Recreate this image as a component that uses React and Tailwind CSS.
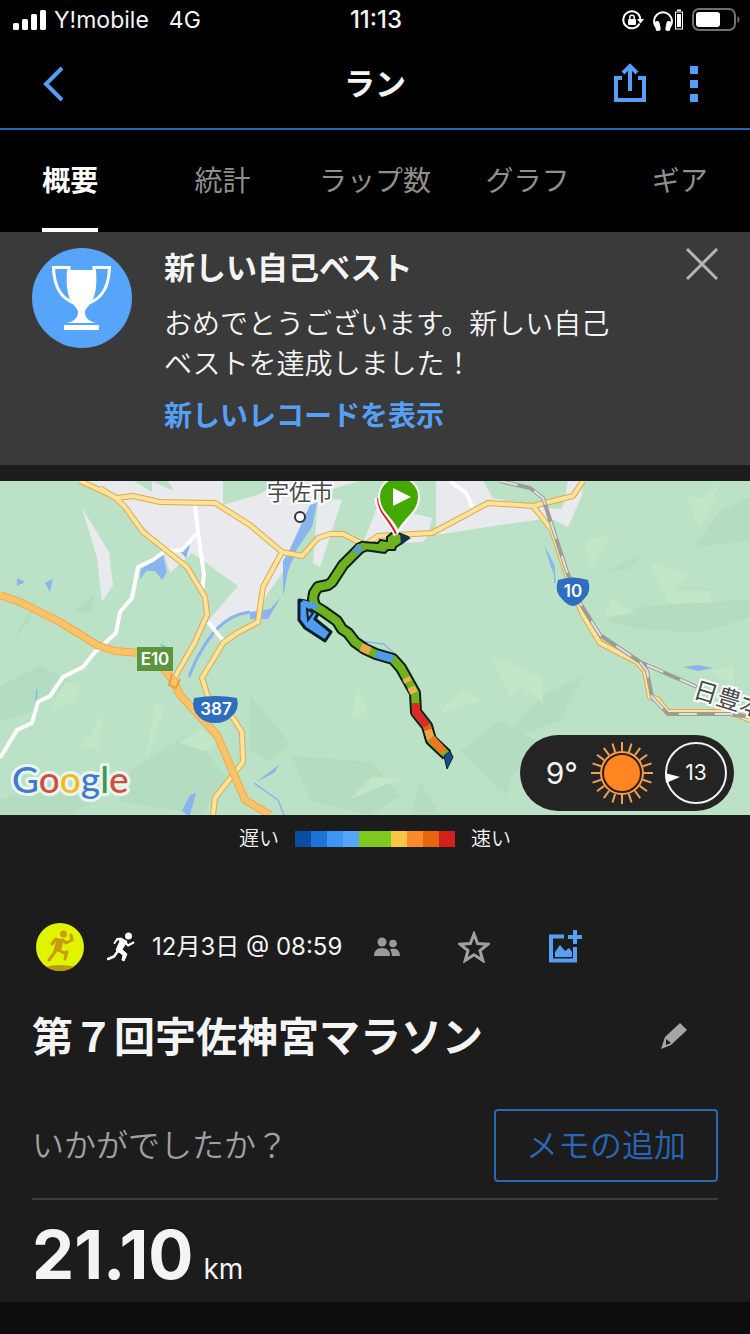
const tabs = ["概要", "統計", "ラップ数", "グラフ", "ギア"];

const paceColors = [
  "bg-[#0a4ea2]",
  "bg-[#1b74d8]",
  "bg-[#3d95f5]",
  "bg-[#55a5fb]",
  "bg-[#7fc81e]",
  "bg-[#7fc81e]",
  "bg-[#fbc548]",
  "bg-[#fb8a28]",
  "bg-[#e8650f]",
  "bg-[#d3201f]",
];

function StatusBar() {
  return (
    <div className="grid h-10 grid-cols-3 items-center pl-3 pr-2.5 text-[23px]">
      <div className="flex items-center whitespace-nowrap">
        <svg className="mr-1.5 h-6 w-9" viewBox="0 0 36 24" fill="#fff">
          <rect x="1" y="15" width="6" height="7" rx="1.5" />
          <rect x="10" y="11" width="6" height="11" rx="1.5" />
          <rect x="19" y="6" width="6" height="16" rx="1.5" />
          <rect x="28" y="2" width="6" height="20" rx="1.5" />
        </svg>
        <span>Y!mobile</span>
        <span className="ml-5">4G</span>
      </div>
      <time className="text-center text-2xl font-medium">11:13</time>
      <div className="flex items-center justify-end">
        <svg className="mr-2 h-6 w-6" viewBox="0 0 24 24" fill="none" stroke="#fff" strokeWidth="2">
          <path d="M19.5 15.5A8.5 8.5 0 1 1 20.3 11" />
          <path d="M17 11h7l-3.5 4.5z" fill="#fff" stroke="none" />
          <rect x="8" y="11" width="8" height="6" rx="1" fill="#fff" stroke="none" />
          <path d="M9.8 11.500V9.500a2.200 2.200 0 0 1 4.400 0v2" strokeWidth="1.500" />
        </svg>
        <svg className="mr-2 h-6 w-8" viewBox="0 0 32 24">
          <path d="M4 19A9 9 0 1 1 18 19" fill="none" stroke="#fff" strokeWidth="2" />
          <rect x="3" y="13" width="5" height="10" rx="2" fill="#fff" transform="rotate(-12 5.500 17.500)" />
          <rect x="14" y="13" width="5" height="10" rx="2" fill="#fff" transform="rotate(12 16.500 17.500)" />
          <rect x="23.500" y="4" width="7" height="17" fill="none" stroke="#fff" />
          <path d="M25 6h4v13h-4zM25 1.500h4v1.500h-4z" fill="#fff" />
        </svg>
        <svg className="h-6 w-12" viewBox="0 0 48 24">
          <rect x="1" y="1" width="42" height="21" rx="6" fill="none" stroke="#707070" strokeWidth="2" />
          <rect x="4" y="4" width="24" height="15" rx="3" fill="#fff" />
          <path d="M45.500 8q2 1 2 3.500t-2 3.500z" fill="#707070" />
        </svg>
      </div>
    </div>
  );
}

function NavBar() {
  return (
    <header className="grid h-[90px] grid-cols-3 items-center border-b-2 border-[#2463b0] px-8">
      <button aria-label="戻る" className="flex h-10 w-11 items-center justify-center">
        <svg className="h-9 w-6" viewBox="0 0 24 36" fill="none" stroke="#569ff7" strokeWidth="4">
          <path d="M20 2 4 18l16 16" />
        </svg>
      </button>
      <h1 className="text-center text-[31px] font-bold leading-10">ラン</h1>
      <div className="flex items-center justify-end gap-[42px] pr-5">
        <button aria-label="共有" className="pb-1">
          <svg className="h-10 w-9" viewBox="0 0 36 40" fill="none" stroke="#569ff7" strokeWidth="4">
            <path d="M10 16H4v22h28V16h-6" />
            <path d="M18 29V4M11 11l7-7 7 7" />
          </svg>
        </button>
        <button aria-label="メニュー" className="flex flex-col gap-1.5">
          <span className="size-2 bg-[#569ff7]" />
          <span className="size-2 bg-[#569ff7]" />
          <span className="size-2 bg-[#569ff7]" />
        </button>
      </div>
    </header>
  );
}

function Tabs() {
  return (
    <nav className="overflow-hidden">
      <div className="-mx-1.5 grid h-[102px] grid-cols-5 justify-items-center">
        {tabs.map((tab, i) => (
          <button
            key={tab}
            className={
              i === 0
                ? "border-b-4 border-white pt-1 font-bold text-white text-[28px]"
                : "border-b-4 border-transparent pt-1 text-[28px] text-[#8f8f8f]"
            }
          >
            {tab}
          </button>
        ))}
      </div>
    </nav>
  );
}

function RecordBanner() {
  return (
    <section className="flex items-start gap-8 bg-[#3a3a3a] px-8 pb-[29px] pt-4">
      <svg className="size-[100px] shrink-0" viewBox="0 0 100 100">
        <circle cx="50" cy="50" r="50" fill="#56a5fb" />
        <path d="M35 22h29c1 14 0 24-4 31-3 5-7 8-7 11 0 5 3 9 11 11H35c8-2 11-6 11-11 0-3-4-6-7-11-4-7-5-17-4-31z" fill="#fff" />
        <path
          d="M37 24V19.500H21.500C22 36 28 50 42 55M62 24V19.500H77.500C77 36 71 50 57 55"
          fill="none"
          stroke="#fff"
          strokeWidth="3"
        />
        <path d="M32 77h35v5H32z" fill="#fff" />
      </svg>
      <div className="flex-1 text-[28px] leading-10">
        <h2 className="text-[31px] font-bold">新しい自己ベスト</h2>
        <p className="mt-4 max-w-[460px] font-[350]">おめでとうございます。新しい自己ベストを達成しました！</p>
        <a href="#records" className="mt-3 block font-bold text-[#569ff7]">
          新しいレコードを表示
        </a>
      </div>
      <button aria-label="閉じる">
        <svg className="size-8" viewBox="0 0 32 32" stroke="#b4b4b4" strokeWidth="3">
          <path d="M1 1l30 30M31 1 1 31" />
        </svg>
      </button>
    </section>
  );
}

const yellowRoads = [
  "M80 0 100 9 117 17 133 15 160 21 215 22 250 44 282 71 302 75 318 57 330 53 343 53 365 64 378 55 432 52 488 22 533 25 573 15 583 0",
  "M100 7 117 18 125 26 143 51 162 66 187 86 205 116 207 134 195 161 175 196",
  "M282 71 263 106 258 141 237 152 223 162 202 197 208 216 233 237 242 251 243 281 215 317 213 334",
  "M533 25 552 49 567 94 583 134 600 162 637 181 645 190 650 216 657 218 668 231 730 231 750 239",
];

const expressway =
  "M0 114 20 121 60 141 97 164 115 170 140 172 160 184 173 199 180 214 217 254 230 284 245 319 270 334";

const whiteRoads =
  "M0 277 17 249 32 242 38 221 50 215 63 196 83 186 95 171 116 152 120 131 132 117 138 86 153 79 165 70 182 69 198 51 195 24M198 51 204 94 202 110M208 141 225 162M450 0 466 12 474 29";

const railways =
  "M500 0 530 7 543 17 567 91 580 122 600 154 640 181 697 206M640 181 647 190 652 216 668 233 730 233 750 236";

const routeLine =
  "M365 65 360 67 343 84 332 101 328 104 318 106 314 112 313 118 315 125 323 130 337 140 342 148 348 152 355 161 365 168 376 173 393 178 401 187 415 212 416 231 427 245 431 259 447 274";

const routeParts = [
  ["M361 65 355 72", "#5c9fb8"],
  ["M361 166 370 170", "#f0a44c"],
  ["M376 173 393 178", "#4d99ea"],
  ["M406 197 408 201M411 206 414 212", "#f0b04c"],
  ["M416 222 416 231 427 245", "#d92a25"],
  ["M427 245 428 249", "#ea5a20"],
  ["M428 249 431 258", "#f0a43c"],
  ["M431 257 444 271", "#ef7623"],
];

function RouteMap() {
  return (
    <svg
      className="block h-[334px] w-full"
      viewBox="0 0 750 334"
      preserveAspectRatio="xMidYMid slice"
      role="img"
      aria-label="コースマップ"
    >
      <rect width="750" height="334" fill="#bbe2c6" />

      {/* terrain shading */}
      <g fill="#b3dcc0">
        <path d="M0 205 40 184 70 200 30 232 0 240zM0 318 60 300 90 322 70 334 0 334zM130 290 190 252 230 300 200 334 120 320zM75 130 95 113 90 132z" />
        <path d="M250 214 290 262 270 280 250 268zM292 275 372 281 400 315 370 334 310 320zM460 270 500 240 540 262 500 310z" />
        <path d="M502 260 540 216 584 194 560 240 510 258zM604 140 640 126 750 118 750 136 700 152 640 148zM694 66 720 30 750 16 750 60zM605 90 640 74 630 88zM420 300 440 334 412 334z" />
        <path d="M12 160 36 118 30 140zM500 300 514 284 506 318z" />
      </g>
      <g fill="#c4e6c8">
        <path d="M50 230 66 200 80 207 72 222zM83 265 103 232 98 268zM146 280 155 222 164 228zM178 262 200 248 220 262 205 270z" />
        <path d="M352 238 357 204 368 230zM440 234 443 226 463 210 483 220 450 228zM350 318 372 296 400 298zM492 178 512 190 512 220z" />
        <path d="M500 178 543 198 543 222 520 205 512 215 500 195zM585 60 612 53 590 88zM650 82 687 94 672 110 665 110zM665 110 711 110 711 122 668 122zM604 136 612 118 636 132zM687 14 703 17 720 4 699 48zM710 190 734 185 733 204z" />
      </g>

      {/* built-up areas */}
      <g fill="#e8eaed">
        <path d="M84 0H134L152 11V0H223V24L260 13 282 0H360L318 12 305 50 292 78 268 112 258 130 236 134 215 148 208 140 238 105 192 72 170 92 162 66 126 27 100 9z" />
        <path d="M82 27 109 71 113 104 102 121 97 77zM318 17 342 19 320 86 313 82zM378 24 432 37 428 55 423 61 365 64 365 57zM436 0H483L493 17 533 25 563 25 568 0H583L582 14 568 46 550 37 500 44 436 54z" />
      </g>
      <path d="M152 0H168L174 10zM540 14 562 8 562 28 545 27z" fill="#bbe2c6" />

      {/* water */}
      <g fill="#8ab4f0">
        <path d="M140 99 141 88 163 74 167 91 162 99 155 90 146 90zM178 68 190 64 186 77zM17 97 25 101 17 105zM45 102 53 98 50 111z" />
        <path d="M310 24 317 22 312 46 297 68 288 90 283 116 283 80 290 68zM250 131 270 128 281 116 268 138 250 138zM160 163 166 165 163 168z" />
        <path d="M187 334 182 330 190 314 196 312 190 334zM256 301 280 283 274 292zM683 186 698 184 713 187 698 190zM544 64 554 83 553 92z" />
      </g>
      <g fill="none" stroke="#8ab4f0">
        <path d="M250 131C222 134 208 158 200 172 193 184 192 188 189 196" strokeWidth="3" />
        <path d="M254 302 278 319 284 334M358 160 384 163 396 174M554 84 555 102M37 208 36 220" strokeWidth="1.5" />
      </g>

      {/* roads and rail */}
      <g fill="none" strokeLinejoin="round">
        <path d={whiteRoads} stroke="#fff" strokeWidth="4" />
        {yellowRoads.map((d) => (
          <path key={d} d={d} stroke="#dfa850" strokeWidth="6" />
        ))}
        {yellowRoads.map((d) => (
          <path key={d} d={d} stroke="#fde49a" strokeWidth="4" />
        ))}
        <path d={expressway} stroke="#f0a84c" strokeWidth="8" />
        <path d={expressway} stroke="#fbc368" strokeWidth="6" />
        <path d="M172 193 169 204 176 207 180 198" stroke="#ee9d3c" strokeWidth="2" />
        <path d={railways} stroke="#9b9b97" strokeWidth="4" />
        <path d={railways} stroke="#dfe3de" strokeWidth="2" strokeDasharray="18 18" />
      </g>

      {/* place names and road shields */}
      <g fontFamily="Inter, 'Noto Sans CJK JP', sans-serif">
        <g fill="#4a4a4a" stroke="#fff" strokeWidth="4" paintOrder="stroke" fontSize="22">
          <text x="267" y="19">宇佐市</text>
          <text fontSize="24" transform="translate(692 216) rotate(17)">日豊本線</text>
        </g>
        <circle cx="300" cy="36" r="5" fill="#fff" stroke="#333" strokeWidth="2" />
        <rect x="137" y="166" width="36" height="24" fill="#5c9440" />
        <path d="M194 217q22-4 43 0 3 12-6 19-6 6-16 6t-16-6q-8-7-5-19z" fill="#2f6dc0" />
        <path d="M558 99q15-5 30 0 4 12-4 19-6 7-11 7t-11-7q-8-7-4-19z" fill="#2f6dc0" />
        <g fill="#fff" fontSize="17" fontWeight="600" textAnchor="middle">
          <text x="155" y="184">E10</text>
          <text x="216" y="234">387</text>
          <text x="573" y="116">10</text>
        </g>
      </g>

      {/* recorded route */}
      <g fill="none" strokeLinejoin="round">
        <path d="M299 119 317 122 321 128 315 138 331 151 325 160 305 147 299 139z" fill="#4f9cf0" stroke="#0b1f2c" strokeWidth="3" />
        <path d={routeLine} stroke="#0b1f14" strokeWidth="12" />
        <path d="M362 61 378 62 380 59 387 60 387 56 392 52 398 52 408 56 402 62 396 66 395 69 388 69 385 72 364 69z" fill="#6eb31f" stroke="#0b1f14" strokeWidth="2" />
        <path d={routeLine} stroke="#6eb31f" strokeWidth="8" />
        {routeParts.map(([d, color]) => (
          <path key={d} d={d} stroke={color} strokeWidth="8" />
        ))}
        <path d="M302 122 317 126" stroke="#4f9cf0" strokeWidth="6" />
      </g>
      <path d="M307 128 313 132 308 139z" fill="#7a9fc0" stroke="#0b1f2c" strokeWidth="2" />
      <path d="M400 52 411 57 401 64z" fill="#16324a" />
      <path d="M444 275 450 270 453 276 447 288z" fill="#164c8a" stroke="#0b1f2c" />

      {/* start marker */}
      <path d="M396 54C390 38 377 32 377 17" fill="none" stroke="#fff" strokeWidth="5" />
      <path d="M396 53C390 38 378 32 378 17" fill="none" stroke="#d0202c" strokeWidth="2" />
      <path d="M398 51C393 37 379 32 379 16a20 20 0 0 1 40 0C419 32 404 37 398 51z" fill="#43a800" stroke="#fff" strokeWidth="2" />
      <path d="M393 7 411 16 393 25z" fill="#fff" />

      <g
        transform="translate(12 312)"
        fontFamily="Lato, sans-serif"
        fontSize="37"
        fontWeight="500"
        stroke="#e9f6ee"
        strokeWidth="6"
        strokeLinejoin="round"
        paintOrder="stroke"
      >
        <text>
          <tspan fill="#4379d0">G</tspan>
          <tspan fill="#d64b3c">o</tspan>
          <tspan fill="#f0bb1c">o</tspan>
          <tspan fill="#4379d0">g</tspan>
          <tspan fill="#3b9a57">l</tspan>
          <tspan fill="#d64b3c">e</tspan>
        </text>
      </g>
    </svg>
  );
}

function Weather() {
  const rays = Array.from({ length: 20 }, (_, i) => i * 18);

  return (
    <div className="absolute bottom-1 right-4 flex h-[76px] items-center rounded-full bg-[#242424] pl-[26px] pr-1.5">
      <span className="text-[30px]">9°</span>
      <svg className="ml-3 size-16" viewBox="-32 -32 64 64" stroke="#f0a050" strokeWidth="2">
        {rays.map((angle) => (
          <path key={angle} d="M0-22V-31" transform={`rotate(${angle})`} />
        ))}
        <circle r="21" fill="#3a1a06" />
        <circle r="18" fill="#ff8620" stroke="none" />
      </svg>
      <div className="relative ml-2.5 flex size-16 items-center justify-center">
        <svg className="absolute inset-0" viewBox="-32 -32 64 64">
          <circle r="30" fill="none" stroke="#f2f2f2" strokeWidth="2" />
          <path d="M-31 0-16 4-30 10z" fill="#fff" />
        </svg>
        <span className="text-[21px]">13</span>
      </div>
    </div>
  );
}

function PaceLegend() {
  return (
    <div className="flex h-12 items-center justify-center gap-4 text-xl font-[350]">
      <span>遅い</span>
      <div className="flex">
        {paceColors.map((color, i) => (
          <span key={i} className={`size-4 ${color}`} />
        ))}
      </div>
      <span>速い</span>
    </div>
  );
}

function Runner({ className, color }) {
  return (
    <svg className={className} viewBox="0 0 28 30" fill="none" stroke={color} strokeLinecap="round" strokeLinejoin="round">
      <circle cx="21.500" cy="4" r="3.500" fill={color} stroke="none" />
      <path d="M10 6.500 14 6 20 9.500 15 17.500 20 22 17 29 15 28 16 23 9 18 13 9z" fill={color} strokeWidth="1" />
      <path d="M13 7 10 7.500 7.500 11M18 10l3 3.500 5.500-3" strokeWidth="2" />
      <path d="M11 19l-4 5.500-6 2.500" strokeWidth="2.500" />
    </svg>
  );
}

function ActivityMeta() {
  return (
    <div className="mt-[60px] flex h-12 items-center pl-1">
      <svg className="size-12" viewBox="0 0 48 48">
        <circle cx="24" cy="24" r="24" fill="#e0f400" />
        <path d="M10 43.500q14-3 28 0-14 9-28 0z" fill="#b39a10" />
        <g fill="none" stroke="#c79c10" strokeLinecap="round" strokeLinejoin="round">
          <circle cx="27.500" cy="11" r="3.500" fill="#c79c10" stroke="none" />
          <path d="M20 16 27 17 24 27 18 29 21 19z" fill="#c79c10" strokeWidth="2" />
          <path d="M20 16 16 21M27 17l3 3 6-3-1-5M19 29l-6 8" strokeWidth="3" />
          <path d="M23 27l5 3 3-1-2 7" strokeWidth="3" />
        </g>
      </svg>
      <Runner className="ml-[23px] h-[30px] w-7" color="#fff" />
      <time className="ml-[17px] whitespace-nowrap text-2xl">12月3日 @ 08:59</time>
      <button aria-label="公開範囲" className="ml-8">
        <svg className="h-5 w-[26px]" viewBox="0 0 26 20" fill="#9a9a9a">
          <circle cx="8" cy="5" r="4.500" />
          <circle cx="19" cy="6.500" r="3.800" />
          <path d="M0 19q0-8 8-8t8 8zM18 19q0-4-2-6.500 1.500-1 3.500-1 6 0 6.500 7.500z" />
        </svg>
      </button>
      <button aria-label="お気に入り" className="ml-[58px]">
        <svg className="size-8" viewBox="0 0 32 32" fill="none" stroke="#a0a0a0" strokeWidth="3">
          <path d="M16 3 19.600 12.500 30 13.200 22 19.500 24.800 29.500 16 23.800 7.200 29.500 10 19.500 2 13.200 12.400 12.500z" />
        </svg>
      </button>
      <button aria-label="写真を追加" className="ml-[57px]">
        <svg className="size-9" viewBox="0 0 36 36">
          <path d="M17 7.500H4v24h24V18" fill="none" stroke="#569ff7" strokeWidth="4" />
          <path d="M28 1v14M21 8h14" stroke="#569ff7" strokeWidth="4" />
          <path d="M8 28v-5l5-7 5 6 4-3 3 4v5z" fill="#569ff7" />
        </svg>
      </button>
    </div>
  );
}

export default function App() {
  return (
    <div className="flex h-screen flex-col bg-[#1c1c1c] font-['Inter','Noto_Sans_CJK_JP',sans-serif] text-[#f4f4f4]">
      <div className="bg-black">
        <StatusBar />
        <NavBar />
        <Tabs />
      </div>
      <main className="min-h-0 flex-1 overflow-hidden">
        <RecordBanner />
        <div className="relative mt-4">
          <RouteMap />
          <Weather />
        </div>
        <PaceLegend />
        <div className="px-8">
          <ActivityMeta />
          <div className="mt-[34px] flex items-center justify-between pr-7">
            <h2 className="text-[41px] font-bold leading-[64px]">第７回宇佐神宮マラソン</h2>
            <button aria-label="タイトルを編集">
              <svg className="size-8" viewBox="0 0 32 32" fill="#a6a6a6">
                <path d="M22 2 29 9 13 24 3 28 7 16z" />
                <path d="M8 18l5 4-5 2z" fill="#1c1c1c" />
              </svg>
            </button>
          </div>
          <div className="mt-10 flex items-center justify-between text-[32px]">
            <p className="font-[350] text-[#a0a0a0]">いかがでしたか？</p>
            <button className="h-[73px] rounded-sm border-2 border-[#2968b8] px-[30px] font-[350] text-[#2968b8]">
              メモの追加
            </button>
          </div>
          <hr className="mt-4 border-t-2 border-[#3c3c3c]" />
          <div className="mt-[22px] flex items-baseline gap-2.5 leading-[66px]">
            <strong className="text-[67px] font-bold">21.10</strong>
            <span className="text-[28px]">km</span>
          </div>
          <p className="mt-2 text-[28px] leading-8">距離</p>
        </div>
      </main>
      <div className="h-8 shrink-0 bg-[#0d0d0d]" />
    </div>
  );
}
